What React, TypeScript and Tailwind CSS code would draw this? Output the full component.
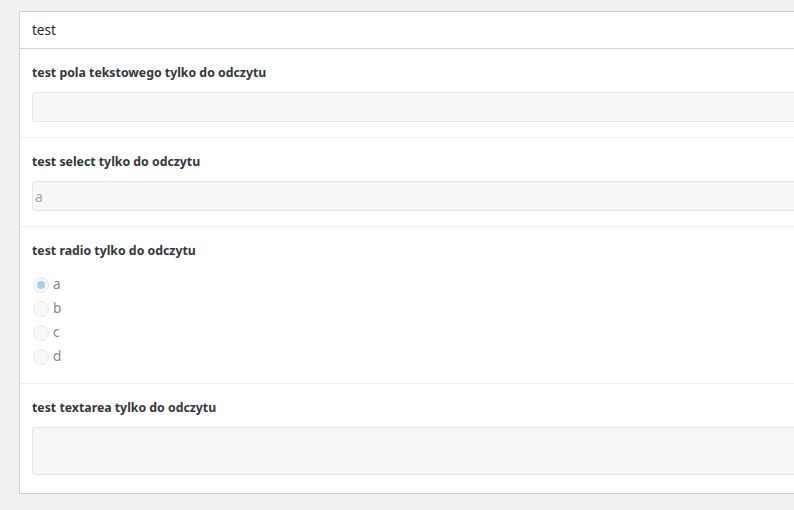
const Field: React.FC<{ label: string; children: React.ReactNode; last?: boolean }> = ({
    label,
    children,
    last,
}) => {
    return (
        <div className={`px-3 pt-[15px] ${last ? "pb-[18px]" : "pb-[15px] border-b border-[#eeeeee]"}`}>
            <div className="h-[18px] leading-[18px] text-[12.3px] font-bold text-[#32373c]">{label}</div>
            {children}
        </div>
    );
};

const App: React.FC = () => {
    return (
        <div
            className="w-[794px] h-[510px] bg-[#f1f1f1] overflow-hidden pt-[11px] pl-[19px]"
            style={{ fontFamily: '"Noto Sans", "Open Sans", sans-serif' }}
        >
            <div className="w-[800px] bg-white border border-[#ccd0d4] border-r-0">
                <div className="h-[37px] px-3 flex items-center border-b border-[#ccd0d4] text-[13.5px] text-[#23282d]">
                    test
                </div>
                <Field label="test pola tekstowego tylko do odczytu">
                    <div className="mt-[10px] h-[30px] bg-[#f7f7f7] border border-[#e5e5e5] rounded-[3px]" />
                </Field>
                <Field label="test select tylko do odczytu">
                    <div className="mt-[10px] h-[30px] bg-[#f7f7f7] border border-[#e5e5e5] rounded-[3px] flex items-center pl-[2px] text-[14px] text-[#a0a5aa]">
                        a
                    </div>
                </Field>
                <Field label="test radio tylko do odczytu">
                    <div className="mt-[13px] mb-[-1px] flex flex-col">
                        {["a", "b", "c", "d"].map((v, i) => (
                            <div key={v} className="h-6 flex items-center gap-[4px] pl-px">
                                <div className="w-4 h-4 rounded-full bg-[#f7f7f7] border border-[#e8e8e8] flex items-center justify-center">
                                    {i === 0 && <div className="w-2 h-2 rounded-full bg-[#a7cfe8]" />}
                                </div>
                                <span className="text-[13.5px] text-[#82878c] leading-none">{v}</span>
                            </div>
                        ))}
                    </div>
                </Field>
                <Field label="test textarea tylko do odczytu" last>
                    <div className="mt-[10px] h-12 bg-[#f7f7f7] border border-[#e5e5e5] rounded-[3px]" />
                </Field>
            </div>
        </div>
    );
};

export default App;
